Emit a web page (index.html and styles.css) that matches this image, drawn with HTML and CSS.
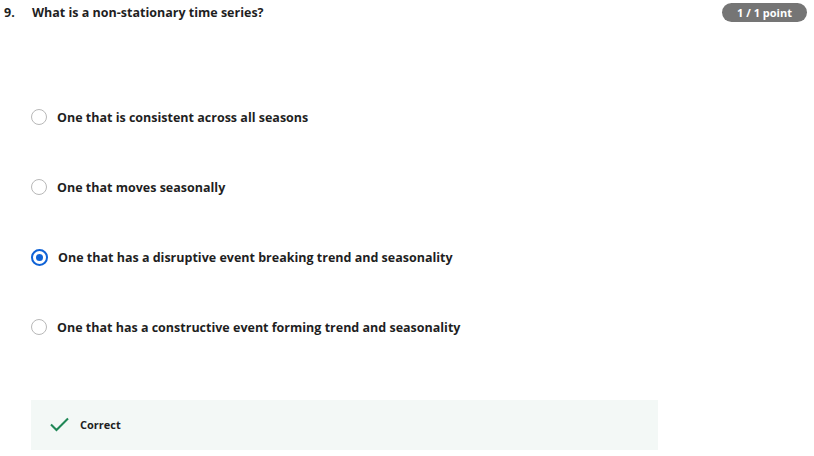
FILE: index.html
```html
<!DOCTYPE html>
<html>
<head>
<meta charset="utf-8">
<link rel="stylesheet" href="styles.css">
</head>
<body>
<div class="question">
  <div class="head">
    <span class="num">9.</span>
    <span class="qtext">What is a non-stationary time series?</span>
    <span class="badge">1 / 1 point</span>
  </div>
  <div class="options">
    <div class="opt"><span class="radio"></span><span>One that is consistent across all seasons</span></div>
    <div class="opt"><span class="radio"></span><span>One that moves seasonally</span></div>
    <div class="opt"><span class="radio checked"></span><span>One that has a disruptive event breaking trend and seasonality</span></div>
    <div class="opt"><span class="radio"></span><span>One that has a constructive event forming trend and seasonality</span></div>
  </div>
  <div class="feedback">
    <svg class="check" width="19" height="15" viewBox="0 0 19 15"><path d="M1 7.5 L6.5 13 L18 1.5" fill="none" stroke="#1f8756" stroke-width="2.1"/></svg>
    <span class="fbtext">Correct</span>
  </div>
</div>
</body>
</html>
```
FILE: styles.css
```css
html, body { margin: 0; padding: 0; background: #fff; }
body { font-family: "Open Sans", sans-serif; color: #1f1f1f; width: 814px; height: 456px; overflow: hidden; }
.question { padding: 3px 7px 0 4px; }
.head { display: flex; align-items: center; height: 19px; }
.num { font-weight: 700; font-size: 12.5px; width: 28px; }
.qtext { font-weight: 700; font-size: 12.5px; flex: 1; }
.badge { background: #757575; color: #fff; font-weight: 700; font-size: 11px; height: 19px; width: 85px; border-radius: 10px; display: flex; align-items: center; justify-content: center; }
.options { display: flex; flex-direction: column; gap: 52px; padding: 86px 0 0 27px; }
.opt { display: flex; align-items: center; height: 18px; font-weight: 700; font-size: 12.5px; }
.radio { width: 14px; height: 14px; border: 1.6px solid #b8b8b8; border-radius: 50%; margin-right: 10px; box-sizing: content-box; flex: none; position: relative; }
.radio.checked { border: 2px solid #0f62d6; width: 13px; height: 13px; }
.radio.checked::after { content: ""; position: absolute; left: 3px; top: 3px; width: 7px; height: 7px; border-radius: 50%; background: #0f62d6; }
.feedback { margin: 64px 0 0 27px; width: 627px; height: 50px; background: #f3f8f6; display: flex; align-items: center; padding-left: 19px; padding-bottom: 1px; box-sizing: border-box; }
.check { margin-right: 11px; }
.fbtext { font-weight: 700; font-size: 11px; }
```
